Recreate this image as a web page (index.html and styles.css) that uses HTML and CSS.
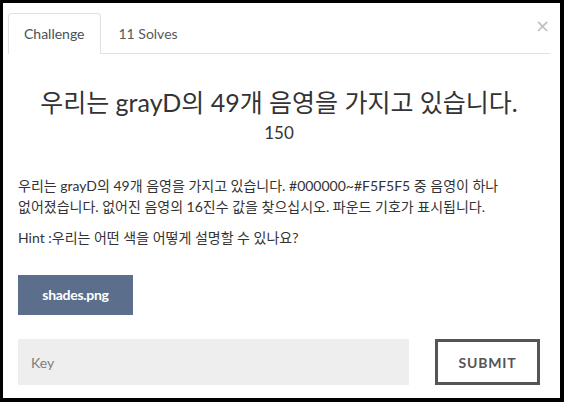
FILE: index.html
```html
<!DOCTYPE html>
<html lang="ko">
<head>
<meta charset="utf-8">
<link rel="stylesheet" href="styles.css">
</head>
<body>
<div class="modal">
  <button class="close" aria-label="Close">&times;</button>
  <ul class="tabs">
    <li class="tab active">Challenge</li>
    <li class="tab">11 Solves</li>
  </ul>
  <div class="content">
    <h3 class="title">우리는 grayD의 49개 음영을 가지고 있습니다.</h3>
    <div class="value">150</div>
    <div class="desc">
      <p>우리는 grayD의 49개 음영을 가지고 있습니다. #000000~#F5F5F5 중 음영이 하나 없어졌습니다. 없어진 음영의 16진수 값을 찾으십시오. 파운드 기호가 표시됩니다.</p>
      <p>Hint :우리는 어떤 색을 어떻게 설명할 수 있나요?</p>
    </div>
    <div class="files">
      <a class="file-btn">shades.png</a>
    </div>
    <form class="submit-row">
      <input class="key" type="text" placeholder="Key">
      <button class="submit" type="button">SUBMIT</button>
    </form>
  </div>
</div>
</body>
</html>
```

FILE: styles.css
```css
html, body {
  margin: 0;
  padding: 0;
  background: #000;
}
body {
  padding: 3px 4px 4px 3px;
  font-family: Lato, "Noto Sans CJK KR", sans-serif;
  color: #333;
}
.modal {
  position: relative;
  width: 557px;
  height: 395px;
  background: #fff;
  box-sizing: border-box;
  overflow: hidden;
}
.close {
  position: absolute;
  top: 12px;
  right: 10px;
  border: 0;
  background: none;
  padding: 0;
  font-family: "DejaVu Sans", sans-serif;
  font-size: 18px;
  line-height: 22px;
  color: #c0c0c0;
  cursor: pointer;
}
.tabs {
  display: flex;
  list-style: none;
  margin: 10px 10px 0 5px;
  padding: 0;
  border-bottom: 1px solid #dee2e6;
}
.tab {
  height: 39px;
  line-height: 39px;
  padding: 0 15px;
  font-size: 14px;
  color: #495057;
  border: 1px solid transparent;
  border-bottom: 0;
  border-radius: 4px 4px 0 0;
  margin-bottom: -1px;
}
.tab + .tab {
  padding: 0 17px;
  color: #55595c;
}
.tab.active {
  border-color: #dee2e6;
  background: #fff;
  height: 40px;
}
.content {
  padding: 0 20px 0 15px;
}
.title {
  margin: 33px 0 0;
  text-align: center;
  font-weight: 400;
  font-size: 25px;
  line-height: 30px;
  color: #333;
  word-break: keep-all;
}
.value {
  text-align: center;
  font-size: 17px;
  line-height: 22px;
  margin-top: 5px;
}
.desc {
  margin-top: 31px;
  font-size: 14px;
  line-height: 21px;
  word-break: keep-all;
}
.desc p {
  margin: 0 0 10px;
}
.files {
  margin-top: 27px;
  display: flex;
}
.file-btn {
  display: block;
  width: 115px;
  height: 40px;
  line-height: 40px;
  text-align: center;
  background: #5b6e8c;
  color: #fff;
  font-weight: 700;
  font-size: 14px;
  letter-spacing: -0.3px;
}
.submit-row {
  margin-top: 24px;
  display: flex;
  justify-content: space-between;
}
.key {
  width: 391px;
  height: 46px;
  box-sizing: border-box;
  border: 0;
  background: #eee;
  padding: 0 13px;
  font-family: Lato, sans-serif;
  font-size: 14px;
  color: #333;
  outline: none;
}
.key::placeholder {
  color: #7d7d7d;
}
.submit {
  width: 105px;
  height: 46px;
  box-sizing: border-box;
  border: 3px solid #555;
  background: #fff;
  font-family: Lato, sans-serif;
  font-weight: 700;
  font-size: 14px;
  letter-spacing: 0.8px;
  color: #555;
  padding: 0;
}
```
